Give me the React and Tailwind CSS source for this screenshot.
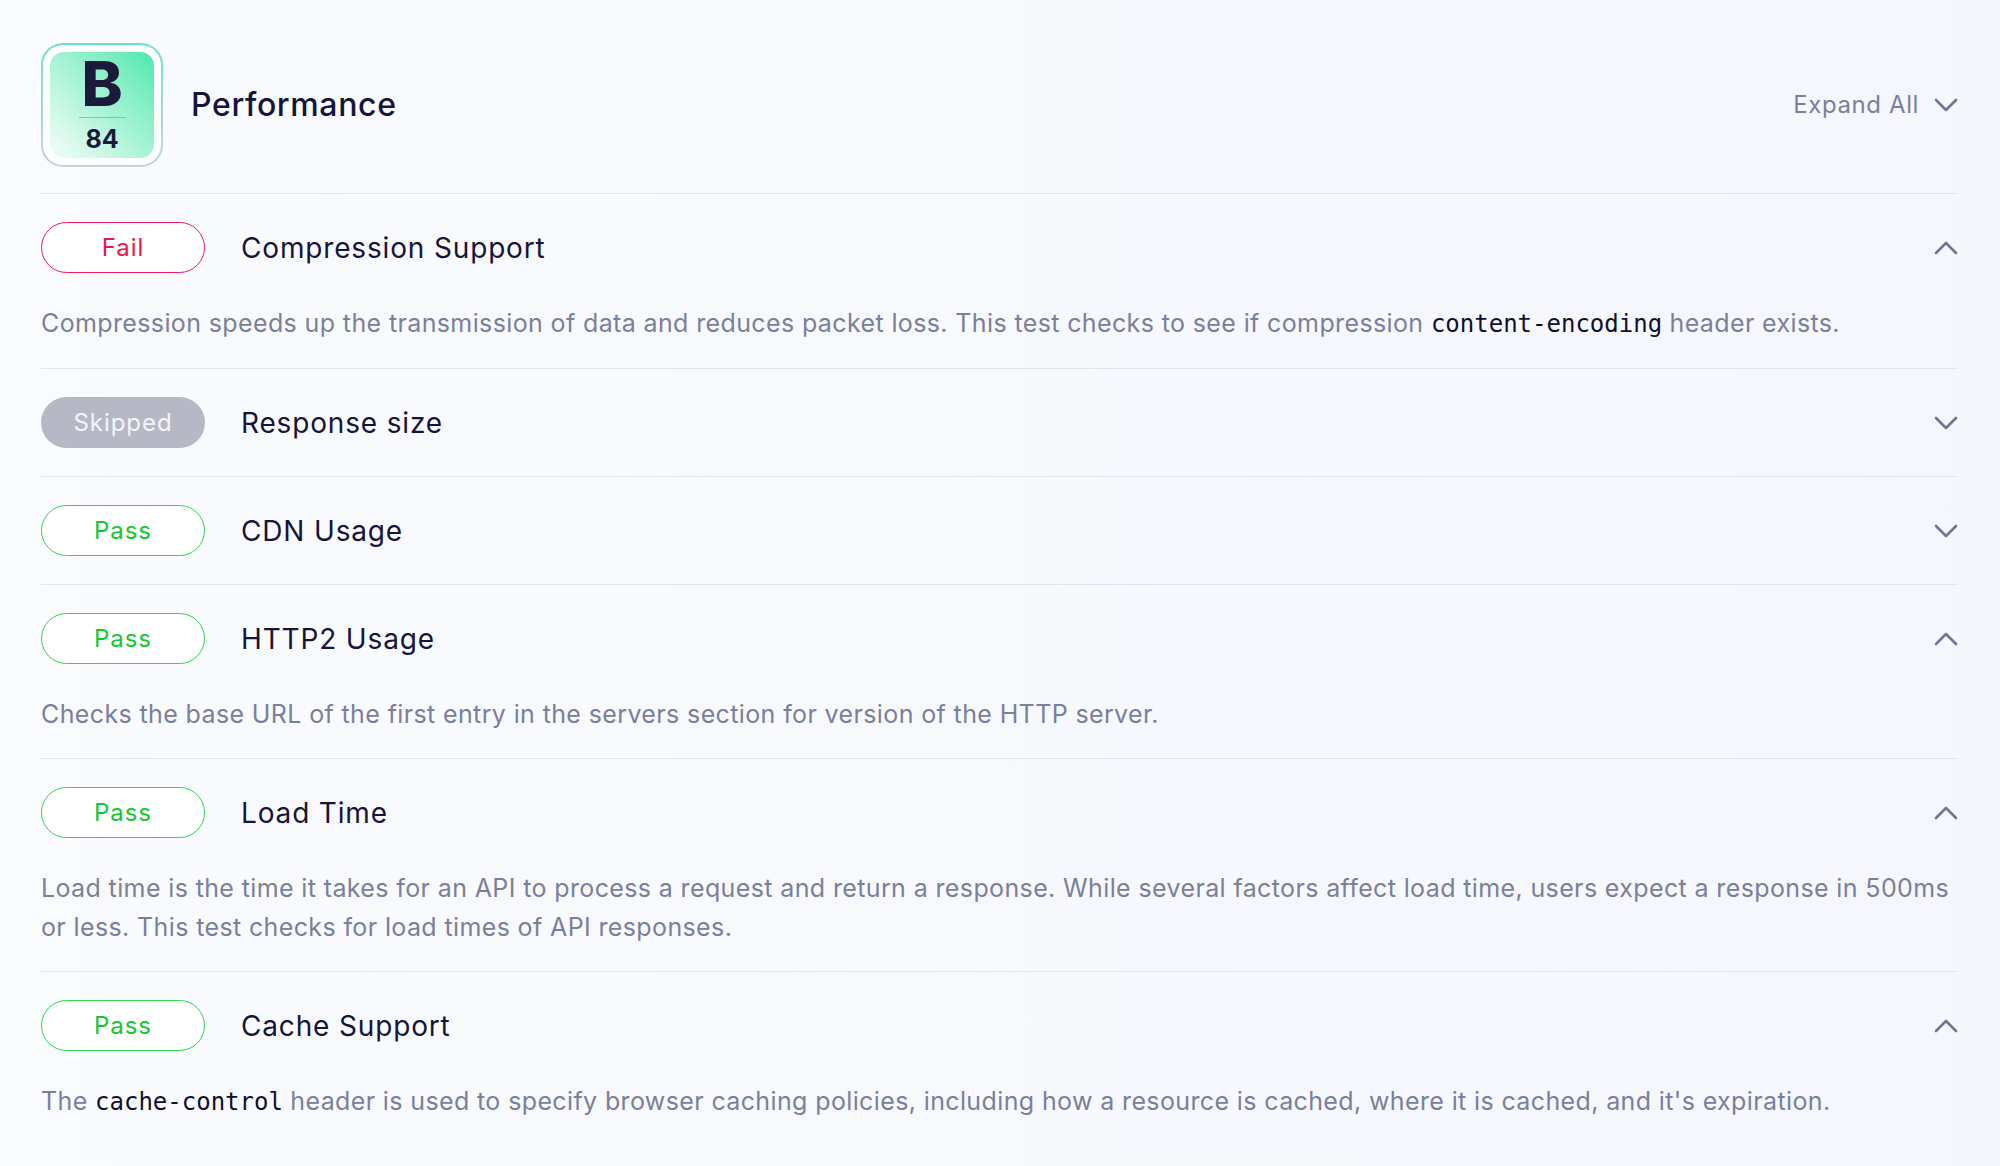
import React from "react";

const SANS = "font-['Inter','Noto_Sans',sans-serif]";
const MONO = "font-['DejaVu_Sans_Mono','Liberation_Mono',monospace] text-[24px] tracking-normal";

const CHECKS = [
  {
    status: "fail",
    title: "Compression Support",
    open: true,
    desc: (
      <>
        Compression speeds up the transmission of data and reduces packet loss. This test checks to see if compression{" "}
        <code className={`${MONO} text-[#0f0f2e]`}>content-encoding</code> header exists.
      </>
    ),
  },
  { status: "skipped", title: "Response size", open: false },
  { status: "pass", title: "CDN Usage", open: false },
  {
    status: "pass",
    title: "HTTP2 Usage",
    open: true,
    desc: "Checks the base URL of the first entry in the servers section for version of the HTTP server.",
  },
  {
    status: "pass",
    title: "Load Time",
    open: true,
    desc: (
      <>
        Load time is the time it takes for an API to process a request and return a response. While several factors affect load time, users expect a response in 500ms
        <br />
        or less. This test checks for load times of API responses.
      </>
    ),
  },
  {
    status: "pass",
    title: "Cache Support",
    open: true,
    last: true,
    desc: (
      <>
        The <code className={`${MONO} text-[#0f0f2e]`}>cache-control</code> header is used to specify browser caching policies, including how a resource is cached, where it is cached, and it's expiration.
      </>
    ),
  },
];

function Chevron({ up }) {
  return (
    <svg width="24" height="14" viewBox="0 0 24 14" fill="none" className="shrink-0">
      <polyline
        points={up ? "2,12 12,2 22,12" : "2,2 12,12 22,2"}
        stroke="#6f7592"
        strokeWidth="2.6"
        strokeLinecap="round"
        strokeLinejoin="round"
      />
    </svg>
  );
}

function StatusPill({ status }) {
  if (status === "fail") {
    return (
      <span className="flex h-[51px] w-[164px] shrink-0 items-center justify-center rounded-full border-[1.5px] border-[#f2195a] bg-white text-[24px] tracking-[0.04em] text-[#f0124d]">
        Fail
      </span>
    );
  }
  if (status === "skipped") {
    return (
      <span className="flex h-[51px] w-[164px] shrink-0 items-center justify-center rounded-full bg-[#b6b8c6] text-[24px] tracking-[0.04em] text-[#f4f5f8]">
        Skipped
      </span>
    );
  }
  return (
    <span className="flex h-[51px] w-[164px] shrink-0 items-center justify-center rounded-full border-[1.5px] border-[#2ad84a] bg-white text-[24px] tracking-[0.04em] text-[#12c92f]">
      Pass
    </span>
  );
}

function GradeBadge() {
  return (
    <div className="h-[124px] w-[122px] shrink-0 rounded-[22px] bg-linear-to-b from-[#62e7bf] to-[#c8d0dd] p-[2px]">
      <div className="h-full w-full rounded-[20px] bg-white p-[7px]">
        <div className="flex h-full w-full flex-col items-center rounded-[14px] bg-linear-to-bl from-[#43e9ae] via-[#a6f3d6] to-[#f4fdf9] pt-[1px]">
          <span className="text-[62px] font-extrabold leading-none text-[#1c1a3b]">B</span>
          <div className="mt-[2px] h-px w-[47px] bg-[#9bb7ae]" />
          <span className="mt-[9px] text-[25px] font-bold leading-none text-[#1c1a3b]">84</span>
        </div>
      </div>
    </div>
  );
}

function CheckRow({ check }) {
  return (
    <div className={`${check.last ? "" : "border-b border-[#e3e5ec]"} pt-[28px] ${check.open ? "pb-[24px]" : "pb-[28px]"}`}>
      <div className="flex items-center">
        <StatusPill status={check.status} />
        <h3 className="ml-[36px] flex-1 text-[28px] tracking-[0.03em] text-[#15143a]">{check.title}</h3>
        <Chevron up={check.open} />
      </div>
      {check.open && (
        <p className="mt-[31px] whitespace-nowrap text-[25px] leading-[39px] tracking-[0.015em] text-[#7a809b]">{check.desc}</p>
      )}
    </div>
  );
}

export default function App() {
  return (
    <div className={`${SANS} min-h-[1166px] w-full bg-linear-to-r from-[#fafbfd] to-[#f5f7fd] pl-[41px] pr-[42px] pt-[43px]`}>
      <header className="flex items-center justify-between border-b border-[#e3e5ec] pb-[26px]">
        <div className="flex items-center gap-[28px]">
          <GradeBadge />
          <h2 className="text-[32px] font-medium tracking-[0.02em] text-[#15143a]">Performance</h2>
        </div>
        <button className="flex items-center gap-[15px] text-[24px] tracking-[0.025em] text-[#7a809b]">
          Expand All
          <Chevron up={false} />
        </button>
      </header>

      {CHECKS.map((c) => (
        <CheckRow key={c.title} check={c} />
      ))}
    </div>
  );
}
